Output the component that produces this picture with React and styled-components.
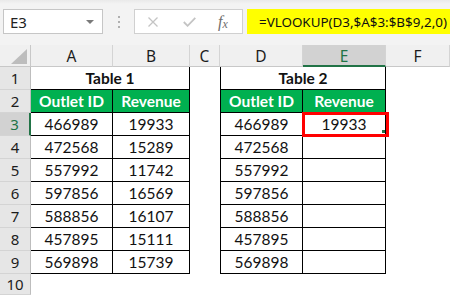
import styled, { createGlobalStyle } from "styled-components";

const GlobalStyle = createGlobalStyle`
  html, body {
    margin: 0;
    padding: 0;
    background: #ffffff;
  }
  #root {
    width: 450px;
    height: 295px;
    overflow: hidden;
  }
`;

const COLS = [
  { key: "A", width: 82 },
  { key: "B", width: 77 },
  { key: "C", width: 30 },
  { key: "D", width: 83 },
  { key: "E", width: 83 },
  { key: "F", width: 64 },
];

const TABLE1 = [
  ["466989", "19933"],
  ["472568", "15289"],
  ["557992", "11742"],
  ["597856", "16569"],
  ["588856", "16107"],
  ["457895", "15111"],
  ["569898", "15739"],
];

export default function App() {
  return (
    <>
      <GlobalStyle />
      <Page>
        <Toolbar>
          <NameBox>
            <span>E3</span>
            <DropArrow />
          </NameBox>
          <Grip>
            <i />
            <i />
            <i />
          </Grip>
          <FormulaButtons>
            <ToolIcon viewBox="0 0 10 10" $w={10}>
              <path d="M0.5 0.5 L9.5 9.5 M9.5 0.5 L0.5 9.5" stroke="#c4c4c4" strokeWidth="1.3" fill="none" />
            </ToolIcon>
            <ToolIcon viewBox="0 0 13 10" $w={13}>
              <path d="M0.8 5 L4.6 8.8 L12.3 0.8" stroke="#c4c4c4" strokeWidth="1.8" fill="none" />
            </ToolIcon>
            <Fx>
              f<sub>x</sub>
            </Fx>
          </FormulaButtons>
          <FormulaInput>=VLOOKUP(D3,$A$3:$B$9,2,0)</FormulaInput>
        </Toolbar>

        <Sheet>
          <Corner>
            <svg width="16" height="15" viewBox="0 0 16 15">
              <polygon points="0,15 16,15 16,0" fill="#bdbdbd" />
            </svg>
          </Corner>
          {COLS.map((c) => (
            <ColHeader key={c.key} $active={c.key === "E"}>
              {c.key}
            </ColHeader>
          ))}

          {/* row 1 */}
          <RowHeader>1</RowHeader>
          <Cell $span={2} $border $bold>
            Table 1
          </Cell>
          <Cell />
          <Cell $span={2} $border $left $bold>
            Table 2
          </Cell>
          <Cell />

          {/* row 2 */}
          <RowHeader>2</RowHeader>
          <Cell $border $green>Outlet ID</Cell>
          <Cell $border $green>Revenue</Cell>
          <Cell />
          <Cell $border $left $green>Outlet ID</Cell>
          <Cell $border $green>Revenue</Cell>
          <Cell />

          {TABLE1.map(([id, rev], i) => (
            <Row key={id} n={i + 3} id={id} rev={rev} />
          ))}

          <RowHeader>10</RowHeader>
          {COLS.map((c) => (
            <Cell key={c.key} />
          ))}
        </Sheet>
      </Page>
    </>
  );
}

function Row({ n, id, rev }) {
  const selected = n === 3;
  return (
    <>
      <RowHeader $active={selected}>{n}</RowHeader>
      <Cell $border>{id}</Cell>
      <Cell $border>{rev}</Cell>
      <Cell />
      <Cell $border $left>{id}</Cell>
      {selected ? <SelectedCell $border>{rev}</SelectedCell> : <Cell $border />}
      <Cell />
    </>
  );
}

const Page = styled.div`
  width: 450px;
  height: 295px;
  display: flex;
  flex-direction: column;
  font-family: "Noto Sans", "Open Sans", sans-serif;
`;

const Toolbar = styled.div`
  height: 45px;
  flex-shrink: 0;
  box-sizing: border-box;
  padding: 9px 0 11px 3px;
  display: flex;
  align-items: stretch;
  background: linear-gradient(#e9e9e9 0, #f3f3f3 4px, #f3f3f3 100%);
`;

const NameBox = styled.div`
  width: 100px;
  flex-shrink: 0;
  box-sizing: border-box;
  background: #ffffff;
  border: 1px solid #c6c6c6;
  display: flex;
  align-items: center;
  justify-content: space-between;
  padding: 0 8px 0 6px;
  font-size: 15px;
  color: #222222;
`;

const DropArrow = styled.span`
  width: 0;
  height: 0;
  border-left: 4px solid transparent;
  border-right: 4px solid transparent;
  border-top: 4px solid #7a7a7a;
`;

const Grip = styled.div`
  width: 31px;
  flex-shrink: 0;
  display: flex;
  flex-direction: column;
  align-items: center;
  justify-content: center;
  gap: 3px;

  i {
    display: block;
    width: 2px;
    height: 2px;
    background: #b0b0b0;
  }
`;

const FormulaButtons = styled.div`
  width: 109px;
  flex-shrink: 0;
  box-sizing: border-box;
  background: #ffffff;
  border: 1px solid #d0d0d0;
  display: flex;
  align-items: center;
  padding: 0 0 0 13px;

  & > :nth-child(2) {
    margin-left: 25px;
  }
  & > :nth-child(3) {
    margin-left: 22px;
  }
`;

const ToolIcon = styled.svg`
  width: ${(p) => p.$w}px;
  height: 10px;
  flex-shrink: 0;
`;

const Fx = styled.span`
  font-family: "Liberation Serif", "DejaVu Serif", serif;
  font-style: italic;
  font-size: 16px;
  color: #6e6e6e;
  line-height: 1;

  sub {
    font-size: 12px;
    vertical-align: -1px;
  }
`;

const FormulaInput = styled.div`
  flex: 1;
  min-width: 0;
  overflow: hidden;
  margin-left: 4px;
  background: #ffff00;
  display: flex;
  align-items: center;
  padding-left: 12px;
  font-size: 13.4px;
  color: #111111;
  white-space: nowrap;
`;

const Sheet = styled.div`
  flex: 1;
  display: grid;
  grid-template-columns: 31px ${COLS.map((c) => `${c.width}px`).join(" ")};
  grid-template-rows: 22px repeat(9, 23px) 1fr;
`;

const Corner = styled.div`
  background: #f0f0f0;
  border-right: 1px solid #c8c8c8;
  border-bottom: 1px solid #c8c8c8;
  box-sizing: border-box;
  display: flex;
  align-items: flex-end;
  justify-content: flex-end;
  padding: 0 3px 2px 0;
`;

const ColHeader = styled.div`
  box-sizing: border-box;
  background: ${(p) => (p.$active ? "#d2d2d2" : "#f0f0f0")};
  border-right: 1px solid #d4d4d4;
  border-bottom: ${(p) => (p.$active ? "2px solid #217346" : "1px solid #c8c8c8")};
  color: ${(p) => (p.$active ? "#217346" : "#1c1c1c")};
  font-size: 15.5px;
  display: flex;
  align-items: center;
  justify-content: center;
  padding-top: ${(p) => (p.$active ? "1px" : "0")};
`;

const RowHeader = styled.div`
  box-sizing: border-box;
  background: ${(p) => (p.$active ? "#d2d2d2" : "#e6e6e6")};
  border-right: ${(p) => (p.$active ? "2px solid #217346" : "1px solid #bdbdbd")};
  border-bottom: 1px solid #d4d4d4;
  color: ${(p) => (p.$active ? "#217346" : "#1c1c1c")};
  font-size: 15px;
  display: flex;
  align-items: center;
  justify-content: center;
`;

const Cell = styled.div`
  box-sizing: border-box;
  grid-column: span ${(p) => p.$span || 1};
  background: ${(p) => (p.$green ? "#00b050" : "#ffffff")};
  color: ${(p) => (p.$green ? "#ffffff" : "#111111")};
  border-right: ${(p) => (p.$border ? "1px solid #000" : "none")};
  border-bottom: ${(p) => (p.$border ? "1px solid #000" : "none")};
  border-left: ${(p) => (p.$left ? "1px solid #000" : "none")};
  font-family: Lato, "Open Sans", sans-serif;
  font-size: 15.5px;
  font-weight: ${(p) => (p.$bold || p.$green ? 700 : 400)};
  display: flex;
  align-items: center;
  justify-content: center;
  white-space: nowrap;
`;

const SelectedCell = styled(Cell)`
  position: relative;

  &::after {
    content: "";
    position: absolute;
    top: -1px;
    left: -1px;
    width: 87px;
    height: 25px;
    box-sizing: border-box;
    border: 3px solid #ff0000;
  }

  &::before {
    content: "";
    position: absolute;
    right: 0;
    bottom: 2px;
    width: 3px;
    height: 3px;
    background: #217346;
    z-index: 1;
  }
`;
